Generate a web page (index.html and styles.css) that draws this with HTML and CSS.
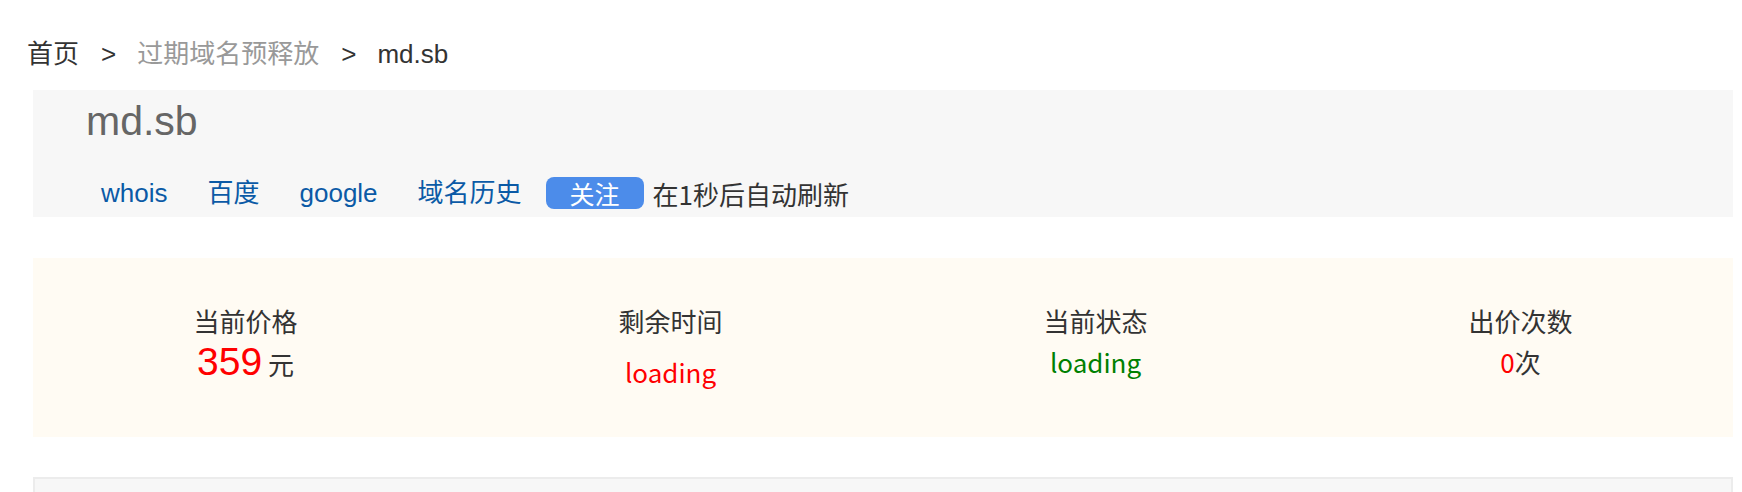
FILE: index.html
```html
<!DOCTYPE html>
<html lang="zh-CN">
<head>
<meta charset="utf-8">
<title>md.sb</title>
<link rel="stylesheet" href="styles.css">
</head>
<body>
<div class="crumbs">
  <a class="crumb-home" href="#">首页</a>
  <span class="sep">&gt;</span>
  <a class="crumb-mid" href="#">过期域名预释放</a>
  <span class="sep">&gt;</span>
  <span class="crumb-cur">md.sb</span>
</div>
<div class="page">
  <div class="domain-head">
    <h1 class="domain-name">md.sb</h1>
    <div class="tools">
      <a class="tool" href="#">whois</a>
      <a class="tool" href="#">百度</a>
      <a class="tool" href="#">google</a>
      <a class="tool tool-last" href="#">域名历史</a>
      <span class="follow">关注</span>
      <span class="refresh">在1秒后自动刷新</span>
    </div>
  </div>
  <div class="stats">
    <div class="stat">
      <div class="stat-label">当前价格</div>
      <div class="stat-value"><span class="price">359</span> 元</div>
    </div>
    <div class="stat">
      <div class="stat-label">剩余时间</div>
      <div class="stat-value"><span class="load-red">loading</span></div>
    </div>
    <div class="stat">
      <div class="stat-label">当前状态</div>
      <div class="stat-value"><span class="load-green">loading</span></div>
    </div>
    <div class="stat">
      <div class="stat-label">出价次数</div>
      <div class="stat-value"><span class="red">0</span>次</div>
    </div>
  </div>
  <div class="bottom-box"></div>
</div>
</body>
</html>
```

FILE: styles.css
```css
html, body {
  margin: 0;
  padding: 0;
  background: #fff;
}
body {
  font-family: "Liberation Sans", "Noto Sans CJK SC", sans-serif;
  font-size: 26px;
  color: #333;
  overflow: hidden;
}
a {
  text-decoration: none;
}
.crumbs {
  display: flex;
  align-items: center;
  height: 36px;
  line-height: 36px;
  margin-top: 36px;
  padding-left: 27px;
}
.crumb-home {
  color: #333;
}
.crumb-mid {
  color: #999;
}
.crumb-cur {
  color: #333;
}
.sep {
  color: #333;
  margin: 0 21px 0 22px;
}
.page {
  margin: 18px 9px 0 33px;
}
.domain-head {
  background: #f7f7f7;
  height: 127px;
  box-sizing: border-box;
  padding: 8px 0 0 53px;
}
.domain-name {
  margin: 0;
  font-family: "Liberation Sans", sans-serif;
  font-weight: normal;
  font-size: 41px;
  line-height: 46px;
  color: #666;
}
.tools {
  display: flex;
  align-items: center;
  margin-top: 33px;
  padding-left: 15px;
  height: 32px;
}
.tool {
  color: #0b5aa6;
  margin-right: 40px;
  line-height: 32px;
}
.tool-last {
  margin-right: 24px;
}
.follow {
  display: inline-block;
  background: #4c8cea;
  color: #fff;
  border-radius: 8px;
  height: 32px;
  line-height: 32px;
  padding: 0 24px;
  font-family: "Noto Sans CJK SC", sans-serif;
  font-size: 25px;
}
.refresh {
  margin-left: 9px;
  color: #333;
  font-family: "Noto Sans CJK SC", sans-serif;
}
.stats {
  margin-top: 41px;
  background: #fffbf3;
  height: 179px;
  box-sizing: border-box;
  padding-top: 45px;
  display: grid;
  grid-template-columns: repeat(4, 1fr);
}
.stat {
  text-align: center;
}
.stat-label {
  line-height: 36px;
  font-family: "Noto Sans CJK SC", sans-serif;
  color: #333;
}
.stat-value {
  line-height: 46px;
  font-family: "Noto Sans CJK SC", sans-serif;
  color: #333;
}
.price {
  font-family: "Liberation Sans", sans-serif;
  font-size: 39px;
  color: #f00;
}
.red {
  color: #f00;
}
.load-red {
  color: #f00;
  display: inline-block;
  margin-top: 10px;
}
.load-green {
  color: #008000;
}
.bottom-box {
  margin-top: 40px;
  height: 120px;
  background: #f7f7f7;
  border: 2px solid #ececec;
}
```
